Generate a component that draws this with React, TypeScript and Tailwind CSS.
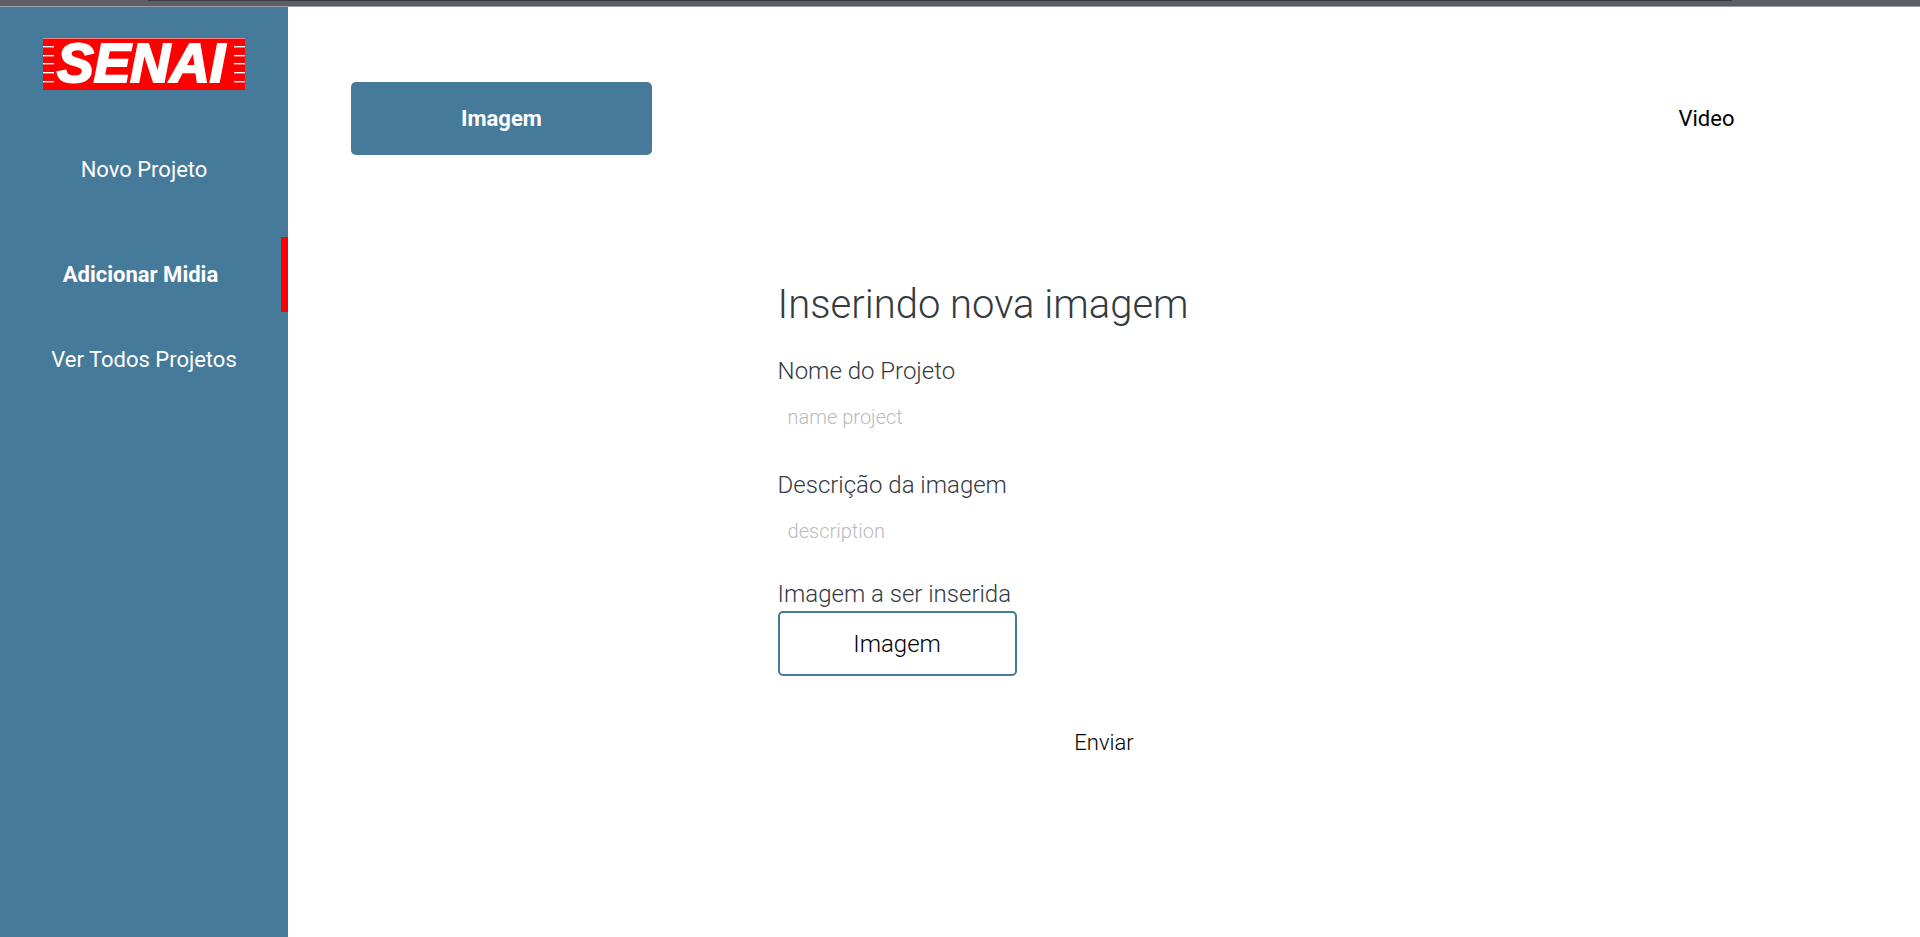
const stripes = [8, 17, 25, 34, 43];

function Logo() {
  return (
    <svg viewBox="0 0 202 52" className="block h-[52px] w-[202px] overflow-visible" role="img" aria-label="SENAI">
      <rect width="202" height="52" fill="#ff0000" />
      <rect width="202" height="1" fill="#f08080" />
      {stripes.map((y) => (
        <g key={y} fill="#ffffff">
          <rect x="0" y={y} width="11" height="1.4" />
          <rect x="191" y={y} width="11" height="1.4" />
        </g>
      ))}
      <text
        x="14"
        y="44"
        fontFamily="'Liberation Sans', Arial, sans-serif"
        fontSize="55"
        fontWeight="700"
        fontStyle="italic"
        fill="#ffffff"
        stroke="#ffffff"
        strokeWidth="2.2"
      >
        SENAI
      </text>
    </svg>
  );
}

function Sidebar() {
  return (
    <aside className="flex w-[15%] shrink-0 flex-col items-center bg-[#467a9a] pt-[31px]">
      <Logo />
      <nav className="mt-[47px] w-full text-[22px] text-white">
        <ul>
          <li>
            <a href="#novo" className="flex h-16 items-center justify-center">Novo Projeto</a>
          </li>
          <li className="mt-9 mb-[15px]">
            <a
              href="#midia"
              aria-current="page"
              className="flex h-[75px] items-center justify-center border-r-[7px] border-[#ff0000] font-bold"
            >
              Adicionar Midia
            </a>
          </li>
          <li>
            <a href="#projetos" className="flex h-16 items-center justify-center">Ver Todos Projetos</a>
          </li>
        </ul>
      </nav>
    </aside>
  );
}

export default function App() {
  return (
    <div className="flex min-h-screen flex-col bg-white font-['Roboto',sans-serif]">
      <div className="h-[7px] border-b border-[#a09ca6] bg-[#5c5e66] pr-[188px] pl-[148px]">
        <div className="h-px bg-[#3a3b41]" />
      </div>
      <div className="flex grow">
        <Sidebar />
        <main className="flex grow flex-col items-center">
          <div className="flex w-full justify-between px-[63px] pt-[75px] text-[22px]">
            <button type="button" className="h-[73px] w-[301px] rounded-[5px] bg-[#467a9a] font-bold text-white">
              Imagem
            </button>
            <button type="button" className="h-[73px] w-[301px] rounded-[5px] text-black">
              Video
            </button>
          </div>
          <form className="mt-[125px] flex w-2/5 flex-col items-start text-2xl font-light text-[#343a40]">
            <h1 className="text-[40px] leading-[50px]">Inserindo nova imagem</h1>
            <label htmlFor="name" className="mt-[25px]">Nome do Projeto</label>
            <input
              id="name"
              type="text"
              placeholder="name project"
              className="mt-1.5 h-12 w-full px-[10px] text-xl outline-none placeholder:text-[#bbbbbb]"
            />
            <label htmlFor="description" className="mt-7">Descrição da imagem</label>
            <input
              id="description"
              type="text"
              placeholder="description"
              className="mt-1.5 h-12 w-full px-[10px] text-xl outline-none placeholder:text-[#bbbbbb]"
            />
            <span className="mt-[23px] mb-px">Imagem a ser inserida</span>
            <button type="button" className="h-[65px] w-[239px] rounded-[5px] border-2 border-[#467a9a] text-black">
              Imagem
            </button>
            <button type="submit" className="mt-8 h-[70px] w-[240px] self-center text-[22px] text-black">
              Enviar
            </button>
          </form>
        </main>
      </div>
    </div>
  );
}
